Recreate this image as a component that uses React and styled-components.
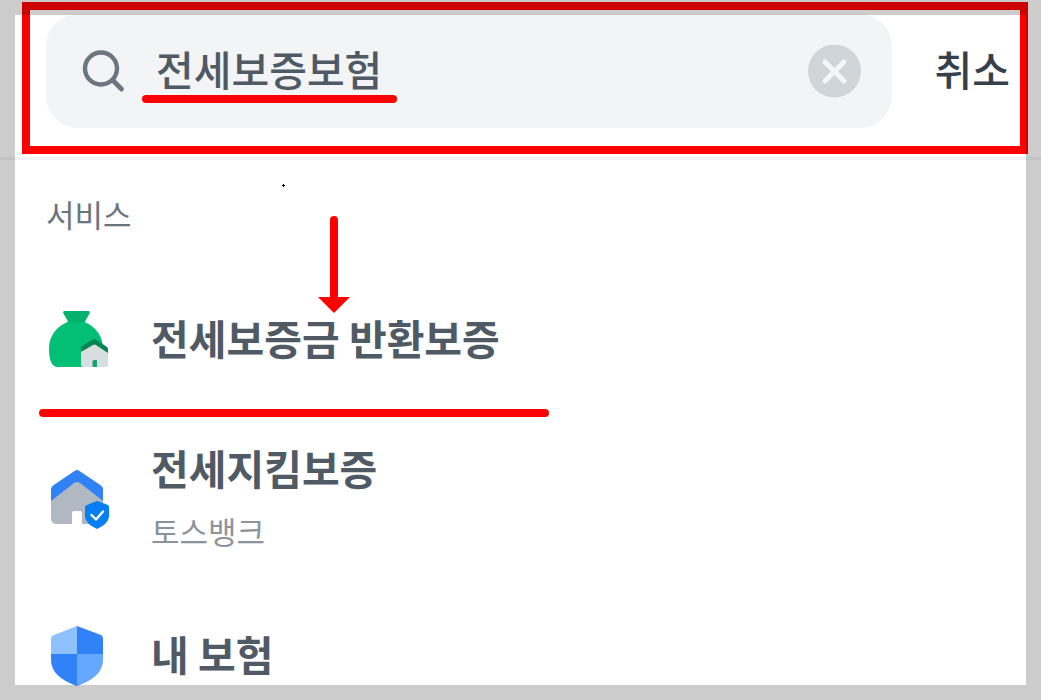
import React, { useState } from "react";
import styled, { createGlobalStyle } from "styled-components";

const GlobalStyle = createGlobalStyle`
  * { box-sizing: border-box; }
  body {
    margin: 0;
    background: #fff;
    font-family: "Noto Sans CJK KR", "Noto Sans", sans-serif;
  }
`;

const Screen = styled.div`
  position: relative;
  height: 100vh;
  overflow: auto;
  scrollbar-width: none;
  background: #fff;
`;

const EdgeShade = styled.div`
  position: fixed;
  inset: 0;
  border: 15px solid rgba(0, 0, 0, 0.2);
  pointer-events: none;
`;

const Header = styled.header`
  position: relative;
  display: flex;
  align-items: center;
  height: 160px;
  padding: 14px 31px 29px 46px;
  border-bottom: 3px solid #f2f4f4;
`;

const SearchField = styled.label`
  display: flex;
  align-items: center;
  flex: 1;
  min-width: 0;
  height: 114px;
  padding: 0 31px 0 36px;
  border-radius: 32px;
  background: #f2f4f5;
`;

const SearchInput = styled.input`
  flex: 1;
  min-width: 0;
  height: 66px;
  margin-left: 31px;
  padding: 0 0 6px;
  border: 0;
  outline: 0;
  background: transparent;
  color: #505a64;
  font: 500 41px/60px "Noto Sans CJK KR", sans-serif;
`;

const ClearButton = styled.button`
  display: flex;
  padding: 0;
  border: 0;
  background: none;
`;

const CancelButton = styled.button`
  margin-left: 43px;
  padding: 0 0 6px;
  border: 0;
  background: none;
  color: #36404b;
  font: 500 41px/60px "Noto Sans CJK KR", sans-serif;
  white-space: nowrap;
`;

const Results = styled.main`
  padding: 32px 46px 0;
`;

const SectionTitle = styled.h2`
  margin: 0;
  color: #6b747d;
  font-size: 31px;
  font-weight: 400;
  line-height: 44px;
`;

const ServiceList = styled.ul`
  margin: 25px 0 0;
  padding: 0;
  list-style: none;
`;

const ServiceLink = styled.a`
  display: flex;
  align-items: center;
  gap: 41px;
  height: 158px;
  color: inherit;
  text-decoration: none;
`;

const ServiceText = styled.span`
  display: flex;
  flex-direction: column;
  gap: 4px;
  padding: ${(p) => (p.$twoLine ? "2px 0 0" : "0 0 6px")};
`;

const ServiceName = styled.span`
  color: #505a64;
  font-size: 41px;
  font-weight: 700;
  line-height: 60px;
`;

const ServiceProvider = styled.span`
  color: #8a949d;
  font-size: 31px;
  line-height: 60px;
`;

const MarkFrame = styled.div`
  position: absolute;
  top: 2px;
  right: 13px;
  left: 22px;
  height: 152px;
  border: 8px solid #f00;
  pointer-events: none;
`;

const MarkLine = styled.div`
  position: absolute;
  top: ${(p) => p.$top}px;
  left: ${(p) => p.$left}px;
  width: ${(p) => p.$length}px;
  height: 8px;
  border-radius: 4px;
  background: #f00;
  pointer-events: none;
`;

const MarkArrow = styled.svg`
  position: absolute;
  top: 216px;
  left: 318px;
  pointer-events: none;
`;

const MarkDot = styled.svg`
  position: absolute;
  top: 184px;
  left: 282px;
  pointer-events: none;
`;

const SearchIcon = () => (
  <svg width="43" height="44" viewBox="0 0 43 44" fill="none" stroke="#6b7680" aria-hidden="true">
    <circle cx="19" cy="19.500" r="16" strokeWidth="4.400" />
    <path d="M31 31.500 39.500 40" strokeWidth="4.800" strokeLinecap="round" />
  </svg>
);

const ClearIcon = () => (
  <svg width="53" height="53" viewBox="0 0 53 53" aria-hidden="true">
    <circle cx="26.500" cy="26" r="26.500" fill="#d0d5d9" />
    <path d="m17 17 19 19M36 17 17 36" stroke="#f5f6f7" strokeWidth="5" strokeLinecap="round" />
  </svg>
);

const MoneyBagIcon = () => (
  <svg width="64" height="60" viewBox="0 0 64 60" aria-hidden="true">
    <path d="M21.500 12H38.500C51 17 57 27 57 40V57H12Q3 57 3 39C3 26 10 17 21.500 12Z" fill="#03bf75" />
    <path d="M17.500 3.500Q16 1 19 1H42Q45 1 43.500 3.500L38.500 12.500H22.500Z" fill="#03b26c" />
    <path d="M35 41V37L46.500 29.500Q48.500 28.500 50 29.500L61 37Q62 38 62 39V43.500L48.500 39Z" fill="#048455" />
    <path d="m35 42 12-7q1.500-1 3 0l12 8v12q0 2-2 2H37q-2 0-2-2Z" fill="#d8dde0" />
    <path d="M46.500 57V51.500q0-1.500 1.500-1.500h3v7Z" fill="#16a66b" />
  </svg>
);

const HouseIcon = () => (
  <svg width="64" height="64" viewBox="0 -4 64 64" aria-hidden="true">
    <path d="M5 32V19Q5 17 7 15.500L28.500 1Q31 -1 33.500 1L55 15.500Q57 17 57 19V32Z" fill="#3182f6" />
    <path d="M5 31 28 13q3-2 6 0l23 18v23H36V43q0-2-2-2h-6q-2 0-2 2v11H11q-6 0-6-6Z" fill="#b0b8c1" />
    <path d="M49.500 31.500Q51 30.500 53 31.500L62 35Q63 36 63 37V47Q62 54 51 59Q40 54 39 47V37Q39 36 41 35Z" fill="#087ef3" />
    <path d="m45.500 45 4.500 4.500 7-8" fill="none" stroke="#fff" strokeWidth="2.400" strokeLinecap="round" strokeLinejoin="round" />
  </svg>
);

const ShieldIcon = () => (
  <svg width="64" height="62" viewBox="0 0 64 62" aria-hidden="true">
    <path d="M31 1 8 10Q5 11 5 14V29H31Z" fill="#8fc1ff" />
    <path d="m31 1 24 9q2 1 2 4v15H31Z" fill="#3182f6" />
    <path d="M5 29H31V61Q5 52 5 35Z" fill="#3182f6" />
    <path d="M31 29H57V35Q57 52 31 61Z" fill="#64a8ff" />
  </svg>
);

const services = [
  { name: "전세보증금 반환보증", Icon: MoneyBagIcon },
  { name: "전세지킴보증", provider: "토스뱅크", Icon: HouseIcon },
  { name: "내 보험", Icon: ShieldIcon },
];

export default function App() {
  const [query, setQuery] = useState("전세보증보험");

  return (
    <>
      <GlobalStyle />
      <Screen>
        <Header>
          <SearchField>
            <SearchIcon />
            <SearchInput
              type="text"
              aria-label="검색"
              value={query}
              onChange={(e) => setQuery(e.target.value)}
            />
            <ClearButton type="button" aria-label="지우기" onClick={() => setQuery("")}>
              <ClearIcon />
            </ClearButton>
          </SearchField>
          <CancelButton type="button">취소</CancelButton>
          <MarkFrame />
        </Header>
        <Results>
          <SectionTitle>서비스</SectionTitle>
          <ServiceList>
            {services.map(({ name, provider, Icon }) => (
              <li key={name}>
                <ServiceLink href="#">
                  <Icon />
                  <ServiceText $twoLine={Boolean(provider)}>
                    <ServiceName>{name}</ServiceName>
                    {provider && <ServiceProvider>{provider}</ServiceProvider>}
                  </ServiceText>
                </ServiceLink>
              </li>
            ))}
          </ServiceList>
        </Results>
        <MarkLine $top={95} $left={142} $length={255} />
        <MarkLine $top={409} $left={39} $length={510} />
        <MarkDot width="3" height="3" viewBox="0 0 3 3" aria-hidden="true">
          <path d="M1 0h1v1h1v1H2v1H1V2H0V1h1Z" fill="#000" />
        </MarkDot>
        <MarkArrow width="32" height="98" viewBox="0 0 32 98" aria-hidden="true">
          <path d="M16 4V84" stroke="#f00" strokeWidth="8" strokeLinecap="round" />
          <path d="M0 81H32L16 97Z" fill="#f00" />
        </MarkArrow>
      </Screen>
      <EdgeShade />
    </>
  );
}
